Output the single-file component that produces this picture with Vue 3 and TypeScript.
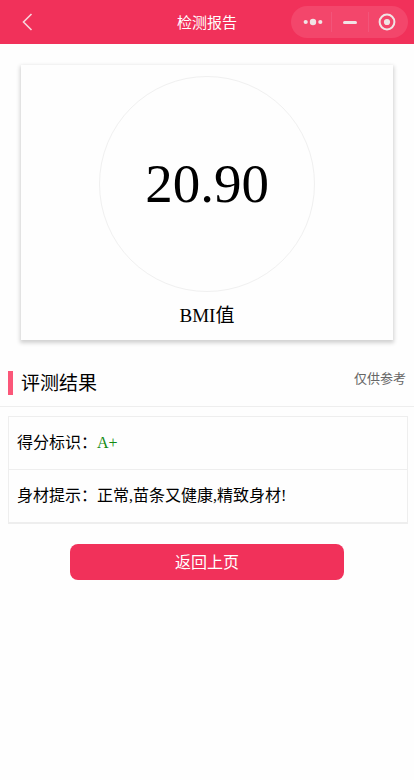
<script setup lang="ts">
interface ResultRow {
  label: string
  value: string
  good?: boolean
}

const bmi: number = 20.9
const rows: ResultRow[] = [
  { label: '得分标识：', value: 'A+', good: true },
  { label: '身材提示：', value: '正常,苗条又健康,精致身材!' },
]

function goBack(): void {
  window.history.back()
}
</script>

<template>
  <div class="page">
    <header class="navbar">
      <button class="back" type="button" aria-label="返回" @click="goBack">
        <svg width="12" height="18" viewBox="0 0 12 18" fill="none">
          <path d="M10.5 1 2.5 9l8 8" stroke="#f8d5dc" stroke-width="1.6" />
        </svg>
      </button>
      <h1 class="title">检测报告</h1>
      <div class="capsule">
        <button type="button" aria-label="更多">
          <svg width="20" height="20" viewBox="0 0 20 20" fill="#f0e4e5">
            <circle cx="2.7" cy="10" r="2.1" />
            <circle cx="10" cy="10" r="3.2" />
            <circle cx="17.3" cy="10" r="2.1" />
          </svg>
        </button>
        <button type="button" aria-label="最小化">
          <svg width="20" height="20" viewBox="0 0 20 20">
            <rect x="3" y="9" width="14" height="3" rx="1.5" fill="#f0e4e5" />
          </svg>
        </button>
        <button type="button" aria-label="关闭">
          <svg width="20" height="20" viewBox="0 0 20 20">
            <circle cx="10" cy="10" r="7.4" fill="none" stroke="#f0e4e5" stroke-width="2" />
            <circle cx="10" cy="10" r="3.1" fill="#f0e4e5" />
          </svg>
        </button>
      </div>
    </header>

    <main>
      <section class="card">
        <div class="dial">{{ bmi.toFixed(2) }}</div>
        <p class="caption">BMI值</p>
      </section>

      <div class="heading">
        <h2>评测结果</h2>
        <span class="note">仅供参考</span>
      </div>

      <dl class="results">
        <div v-for="row in rows" :key="row.label" class="row">
          <dt>{{ row.label }}</dt>
          <dd :class="{ good: row.good }">{{ row.value }}</dd>
        </div>
      </dl>

      <button class="return" type="button" @click="goBack">返回上页</button>
    </main>
  </div>
</template>

<style>
body {
  margin: 0;
  background: #fefefe;
}
</style>

<style scoped>
.page {
  color: #000;
  font-family: "Liberation Serif", "Noto Sans CJK SC", serif;
  font-size: 16px;
}

button {
  margin: 0;
  padding: 0;
  border: 0;
  background: none;
  cursor: pointer;
}

svg {
  display: block;
}

.navbar {
  display: grid;
  grid-template-columns: 117px 1fr 117px;
  align-items: center;
  height: 44px;
  padding: 0 6px;
  background: #f1315a;
}

.back {
  justify-self: start;
  padding-left: 15px;
}

.title {
  margin: 0;
  color: #fff;
  font-family: "Noto Sans CJK SC", sans-serif;
  font-size: 15px;
  font-weight: 400;
  line-height: 20px;
  text-align: center;
}

.capsule {
  display: grid;
  grid-template-columns: 40px 37px 1fr;
  align-items: center;
  height: 32px;
  border-radius: 16px;
  background: #f3466b;
}

.capsule button {
  display: grid;
  place-items: center;
  height: 20px;
}

.capsule button:first-child {
  padding-left: 4px;
}

.capsule button:last-child {
  padding-right: 4px;
}

.capsule button + button {
  border-left: 1px solid #f2557a;
}

.card {
  display: flex;
  flex-direction: column;
  align-items: center;
  margin: 21px 21px 0;
  padding: 11px 0 8px;
  background: #fefefe;
  box-shadow: 0 2px 4px 1px rgba(0, 0, 0, 0.18);
}

.dial {
  display: grid;
  place-items: center;
  box-sizing: border-box;
  width: 216px;
  height: 216px;
  padding-bottom: 2px;
  border: 1px solid #f0f0f0;
  border-radius: 50%;
  font-size: 55px;
}

.caption {
  margin: 8px 0 0;
  font-size: 19px;
  line-height: 32px;
}

.heading {
  display: flex;
  justify-content: space-between;
  margin-top: 31px;
  padding: 0 8px 11px;
  border-bottom: 1px solid #eee;
}

.heading h2 {
  box-sizing: border-box;
  height: 24px;
  margin: 0;
  padding-left: 8px;
  border-left: 5px solid #fb5779;
  font-size: 19px;
  font-weight: 400;
  line-height: 26px;
}

.note {
  color: #666;
  font-size: 13px;
  line-height: 16px;
}

.results {
  margin: 9px 6px 0 8px;
  border: 1px solid #eee;
  border-bottom-width: 2px;
}

.row {
  display: flex;
  padding: 14px 8px;
  line-height: 24px;
}

.row + .row {
  border-top: 1px solid #eee;
}

dd {
  margin: 0;
}

.good {
  color: #138a13;
}

.return {
  display: block;
  width: calc(100% - 140px);
  height: 36px;
  margin: 20px auto 0;
  padding-bottom: 2px;
  border-radius: 8px;
  background: #f1315a;
  color: #fff;
  font-family: "Noto Sans CJK SC", sans-serif;
  font-size: 16px;
}
</style>
